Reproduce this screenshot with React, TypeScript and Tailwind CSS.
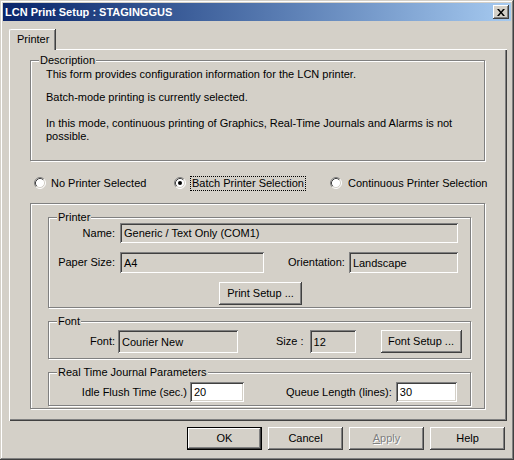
import React from 'react';

const raised =
  'shadow-[inset_-1px_-1px_#404040,inset_1px_1px_#ffffff,inset_-2px_-2px_#808080,inset_2px_2px_#d4d0c8]';
const sunken =
  'shadow-[inset_1px_1px_#808080,inset_-1px_-1px_#ffffff,inset_2px_2px_#404040,inset_-2px_-2px_#d4d0c8]';

const Group = ({ label, className, children }: { label?: string; className?: string; children: React.ReactNode }) => (
  <div
    className={`relative border border-[#808080] shadow-[1px_1px_#ffffff,inset_1px_1px_#ffffff] ${className ?? ''}`}
  >
    {label && (
      <span className="absolute -top-[7px] left-[8px] bg-[#d4d0c8] px-[1px] leading-[13px]">{label}</span>
    )}
    {children}
  </div>
);

const Field = ({ value, white, className }: { value: string; white?: boolean; className?: string }) => (
  <div
    className={`${sunken} ${white ? 'bg-white' : 'bg-[#d4d0c8]'} flex items-center pl-[4px] pt-[1px] ${className ?? ''}`}
  >
    {value}
  </div>
);

const Btn = ({ children, className, isDefault }: { children: React.ReactNode; className?: string; isDefault?: boolean }) => (
  <div className={`${isDefault ? 'border border-black' : ''} ${className ?? ''}`}>
    <div className={`${raised} bg-[#d4d0c8] h-full w-full flex items-center justify-center`}>{children}</div>
  </div>
);

const Radio = ({ checked }: { checked?: boolean }) => (
  <svg width="12" height="12" viewBox="0 0 12 12" className="shrink-0">
    <circle cx="6" cy="6" r="5" fill="#ffffff" />
    <path d="M2.11 9.89 A5.5 5.5 0 0 1 9.89 2.11" fill="none" stroke="#808080" strokeWidth="1" />
    <path d="M9.89 2.11 A5.5 5.5 0 0 1 2.11 9.89" fill="none" stroke="#ffffff" strokeWidth="1" />
    <path d="M2.82 9.18 A4.5 4.5 0 0 1 9.18 2.82" fill="none" stroke="#404040" strokeWidth="1" />
    <path d="M9.18 2.82 A4.5 4.5 0 0 1 2.82 9.18" fill="none" stroke="#d4d0c8" strokeWidth="1" />
    {checked && <circle cx="6" cy="6" r="2" fill="#000000" />}
  </svg>
);

export default function App() {
  return (
    <div className="w-[514px] h-[460px] bg-[#d4d0c8] p-[3px] flex flex-col font-['Liberation_Sans',Arial,sans-serif] text-[11px] leading-[13px] text-black shadow-[inset_-1px_-1px_#404040,inset_1px_1px_#d4d0c8,inset_-2px_-2px_#808080,inset_2px_2px_#ffffff]">
      {/* Title bar */}
      <div className="h-[18px] flex items-center justify-between pl-[2px] pr-[2px] bg-linear-to-r from-[#0a246a] to-[#a6caf0]">
        <span className="font-bold text-white">LCN Print Setup : STAGINGGUS</span>
        <div className={`${raised} bg-[#d4d0c8] w-[16px] h-[14px] flex items-center justify-center`}>
          <svg width="8" height="7" viewBox="0 0 8 7">
            <path d="M0 0h2l2 2.5L6 0h2L5 3.5 8 7H6L4 4.5 2 7H0l3-3.5z" fill="#000000" />
          </svg>
        </div>
      </div>

      {/* Tab strip */}
      <div className="mt-[8px] ml-[6px] flex">
        <div className="relative z-10 -mb-px h-[21px] w-[46px] bg-[#d4d0c8] border-t border-l border-white rounded-tl-[2px] shadow-[inset_-1px_0_#808080,1px_0_#404040] pl-[7px] pt-[3px]">
          Printer
        </div>
      </div>

      {/* Tab panel */}
      <div className="ml-[6px] w-[498px] h-[372px] pl-[21px] pr-[22px] pt-[11px] shadow-[inset_1px_1px_#ffffff,inset_-1px_-1px_#404040,inset_-2px_-2px_#808080] flex flex-col">
        <Group label="Description" className="h-[101px] pl-[15px] pt-[7px]">
          <p>This form provides configuration information for the LCN printer.</p>
          <p className="mt-[10px]">Batch-mode printing is currently selected.</p>
          <p className="mt-[13px] pr-[20px]">
            In this mode, continuous printing of Graphics, Real-Time Journals and Alarms is not possible.
          </p>
        </Group>

        {/* Mode radios */}
        <div className="mt-[14px] h-[16px] flex items-center pl-[4px] whitespace-nowrap">
          <div className="w-[140px] shrink-0 flex items-center gap-[5px]">
            <Radio />
            <span>No Printer Selected</span>
          </div>
          <div className="w-[156px] shrink-0 flex items-center gap-[4px]">
            <Radio checked />
            <span className="border border-dotted border-black px-px">Batch Printer Selection</span>
          </div>
          <div className="shrink-0 flex items-center gap-[6px]">
            <Radio />
            <span>Continuous Printer Selection</span>
          </div>
        </div>

        {/* Printer settings */}
        <Group className="mt-[12px] h-[206px] pl-[17px] pr-[13px] pt-[13px] flex flex-col">
          <Group label="Printer" className="h-[91px] pt-[5px] flex flex-col">
            <div className="flex items-center h-[20px]">
              <span className="w-[67px] text-right pr-[1px]">Name:</span>
              <Field value="Generic / Text Only (COM1)" className="ml-[4px] w-[338px] h-[20px]" />
            </div>
            <div className="mt-[9px] flex items-center h-[21px]">
              <span className="w-[67px] text-right pr-[1px]">Paper Size:</span>
              <Field value="A4" className="ml-[4px] w-[144px] h-[21px]" />
              <span className="ml-[24px]">Orientation:</span>
              <Field value="Landscape" className="ml-[4px] w-[109px] h-[21px]" />
            </div>
            <div className="mt-[9px] flex justify-center pl-[2px]">
              <Btn className="w-[83px] h-[23px]">Print Setup ...</Btn>
            </div>
          </Group>

          <Group label="Font" className="mt-[13px] h-[38px] pt-[8px] flex">
            <div className="flex items-center h-[23px]">
              <span className="w-[66px] text-right">Font:</span>
              <Field value="Courier New" className="ml-[3px] w-[120px] h-[23px]" />
              <span className="ml-[38px]">Size :</span>
              <Field value="12" className="ml-[6px] w-[46px] h-[23px]" />
              <Btn className="ml-[25px] w-[81px] h-[23px]">Font Setup ...</Btn>
            </div>
          </Group>

          <Group label="Real Time Journal Parameters" className="mt-[13px] h-[34px] pt-[9px] flex">
            <div className="flex items-center h-[20px]">
              <span className="w-[138px] text-right">Idle Flush Time (sec.)</span>
              <Field value="20" white className="ml-[3px] w-[54px] h-[20px]" />
              <span className="ml-[42px]">Queue Length (lines):</span>
              <Field value="30" white className="ml-[4px] w-[61px] h-[20px]" />
            </div>
          </Group>
        </Group>
      </div>

      {/* Dialog buttons */}
      <div className="mt-[6px] flex justify-end gap-[6px] pr-[6px]">
        <Btn isDefault className="w-[75px] h-[23px]">OK</Btn>
        <Btn className="w-[75px] h-[23px]">Cancel</Btn>
        <Btn className="w-[75px] h-[23px]">
          <span className="text-[#808080] [text-shadow:1px_1px_#ffffff]">
            <span className="underline">A</span>pply
          </span>
        </Btn>
        <Btn className="w-[75px] h-[23px]">Help</Btn>
      </div>
    </div>
  );
}
